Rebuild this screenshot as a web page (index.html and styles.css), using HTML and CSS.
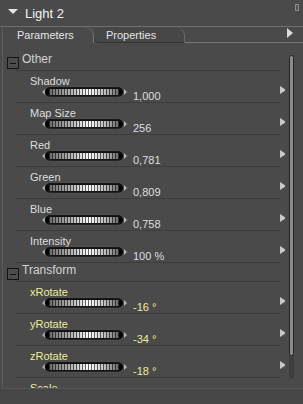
FILE: index.html
```html
<!DOCTYPE html>
<html lang="en">

<head>
    <meta charset="UTF-8">
    <title>Light 2</title>
    <link rel="stylesheet" href="styles.css">
</head>

<body>
    <div class="panel">
        <div class="title">
            <span class="fold"></span>
            <span class="name">Light 2</span>
            <span class="pin"></span>
        </div>

        <div class="tabs">
            <div class="tab active">Parameters</div>
            <div class="tab">Properties</div>
            <div class="fill"><span class="go"></span></div>
        </div>

        <div class="content">
            <div class="list">

                <div class="head"><span class="box"></span>Other</div>
                <div class="rows">
                    <div class="row">
                        <div class="ctl">
                            <div class="label">Shadow</div>
                            <div class="field"><span class="nudge l"></span><span class="knob"><span class="ridge"></span></span><span class="nudge r"></span><span class="value">1,000</span></div>
                        </div>
                        <span class="more"></span>
                    </div>
                    <div class="row">
                        <div class="ctl">
                            <div class="label">Map Size</div>
                            <div class="field"><span class="nudge l"></span><span class="knob"><span class="ridge"></span></span><span class="nudge r"></span><span class="value">256</span></div>
                        </div>
                        <span class="more"></span>
                    </div>
                    <div class="row">
                        <div class="ctl">
                            <div class="label">Red</div>
                            <div class="field"><span class="nudge l"></span><span class="knob"><span class="ridge"></span></span><span class="nudge r"></span><span class="value">0,781</span></div>
                        </div>
                        <span class="more"></span>
                    </div>
                    <div class="row">
                        <div class="ctl">
                            <div class="label">Green</div>
                            <div class="field"><span class="nudge l"></span><span class="knob"><span class="ridge"></span></span><span class="nudge r"></span><span class="value">0,809</span></div>
                        </div>
                        <span class="more"></span>
                    </div>
                    <div class="row">
                        <div class="ctl">
                            <div class="label">Blue</div>
                            <div class="field"><span class="nudge l"></span><span class="knob"><span class="ridge"></span></span><span class="nudge r"></span><span class="value">0,758</span></div>
                        </div>
                        <span class="more"></span>
                    </div>
                    <div class="row">
                        <div class="ctl">
                            <div class="label">Intensity</div>
                            <div class="field"><span class="nudge l"></span><span class="knob"><span class="ridge"></span></span><span class="nudge r"></span><span class="value">100 %</span></div>
                        </div>
                        <span class="more"></span>
                    </div>
                </div>

                <div class="head"><span class="box"></span>Transform</div>
                <div class="rows keyed">
                    <div class="row">
                        <div class="ctl">
                            <div class="label">xRotate</div>
                            <div class="field"><span class="nudge l"></span><span class="knob"><span class="ridge"></span></span><span class="nudge r"></span><span class="value">-16 °</span></div>
                        </div>
                        <span class="more"></span>
                    </div>
                    <div class="row">
                        <div class="ctl">
                            <div class="label">yRotate</div>
                            <div class="field"><span class="nudge l"></span><span class="knob"><span class="ridge"></span></span><span class="nudge r"></span><span class="value">-34 °</span></div>
                        </div>
                        <span class="more"></span>
                    </div>
                    <div class="row">
                        <div class="ctl">
                            <div class="label">zRotate</div>
                            <div class="field"><span class="nudge l"></span><span class="knob"><span class="ridge"></span></span><span class="nudge r"></span><span class="value">-18 °</span></div>
                        </div>
                        <span class="more"></span>
                    </div>
                    <div class="row">
                        <div class="ctl">
                            <div class="label">Scale</div>
                        </div>
                    </div>
                </div>

            </div>
            <div class="scroll">
                <div class="track"><div class="thumb"></div></div>
            </div>
        </div>
        <div class="foot"></div>
    </div>
</body>

</html>
```

FILE: styles.css
```css
body {
    margin: 0;
    background: #474747;
    font-family: "Liberation Sans", Arial, sans-serif;
    color: #dedede;
}

.panel {
    width: 303px;
    height: 404px;
    background: #4a4a4a;
    display: flex;
    flex-direction: column;
    overflow: hidden;
}

/* title bar */
.title {
    height: 26px;
    display: flex;
    align-items: flex-start;
    border-bottom: 1px solid #6e6e6e;
}

.fold {
    margin: 9px 0 0 8px;
    border-top: 5px solid #e6e6e6;
    border-left: 5px solid transparent;
    border-right: 5px solid transparent;
}

.name {
    margin: 5px 0 0 7px;
    font-size: 13px;
    line-height: 17px;
    color: #f2f2f2;
}

.pin {
    margin: 4px 4px 0 auto;
    width: 2px;
    height: 5px;
    border: 1px solid #8a8a8a;
    background: #555;
}

/* tabs */
.tabs {
    height: 16px;
    display: flex;
    margin-left: 2px;
    border-left: 1px solid #5c5c5c;
    font-size: 11px;
    line-height: 16px;
}

.tab {
    box-sizing: border-box;
    color: #e4e4e4;
}

.tab.active {
    width: 91px;
    padding-left: 14px;
    border-right: 1px solid #757575;
    border-top-right-radius: 9px;
}

.tab+.tab {
    width: 91px;
    padding-left: 12px;
    border-right: 1px solid #6c6c6c;
    border-bottom: 1px solid #333;
    border-top-right-radius: 9px;
    border-bottom-left-radius: 5px;
    background: #474747;
}

.fill {
    flex: 1;
    display: flex;
    border-bottom: 1px solid #767676;
}

.go {
    margin: 1px 10px 0 auto;
    border-left: 6px solid #dcdcdc;
    border-top: 5px solid transparent;
    border-bottom: 5px solid transparent;
    height: 0;
}

/* body */
.content {
    height: 345px;
    display: flex;
    margin-left: 2px;
    border-left: 1px solid #5c5c5c;
    border-bottom: 1px solid #575757;
}

.list {
    flex: 1;
    overflow: hidden;
    padding-top: 9px;
}

.head {
    height: 18px;
    display: flex;
    align-items: flex-start;
    font-size: 12px;
    line-height: 14px;
    color: #d2d2d2;
}

.box {
    box-sizing: border-box;
    width: 12px;
    height: 12px;
    margin: 5px 3px 0 4px;
    border: 1px solid #141414;
    background: #4c4c4c;
    display: flex;
    align-items: center;
    justify-content: center;
}

.box::after {
    content: "";
    width: 6px;
    height: 1px;
    background: #141414;
}

.rows {
    margin: 0 5px 0 12px;
    border-top: 1px solid #3d3d3d;
}

.row {
    box-sizing: border-box;
    height: 32px;
    display: flex;
    align-items: flex-start;
    padding-left: 15px;
    border-bottom: 1px solid #3d3d3d;
}

.ctl {
    flex: 1;
    padding-top: 4px;
}

.label {
    font-size: 11px;
    line-height: 12px;
}

.keyed .label,
.keyed .value {
    color: #ecec9e;
}

.field {
    display: flex;
    align-items: flex-start;
    margin-left: 12px;
    height: 14px;
}

.nudge {
    margin-top: 2px;
    height: 0;
    border-top: 3px solid transparent;
    border-bottom: 3px solid transparent;
}

.nudge.l {
    border-right: 3px solid #a4a4a4;
}

.nudge.r {
    border-left: 3px solid #b4b4b4;
    margin-left: 1px;
}

.knob {
    width: 78px;
    height: 10px;
    border-radius: 5px;
    background: linear-gradient(#1a1a1a, #000 40%, #000 70%, #2a2a2a);
    box-shadow: 0 0 1px #777;
    display: flex;
    align-items: center;
    justify-content: center;
}

.ridge {
    width: 70px;
    height: 6px;
    background:
        repeating-linear-gradient(90deg, rgba(0, 0, 0, 0.6) 0 1px, transparent 1px 3px),
        linear-gradient(90deg, #6a6a6a, #bdbdbd 35%, #fff 58%, #bdbdbd 80%, #6a6a6a);
}

.value {
    margin-left: 6px;
    padding-top: 3px;
    font-size: 11px;
    line-height: 12px;
}

.more {
    margin: 15px -6px 0 0;
    border-left: 6px solid #c9c9c9;
    border-top: 4px solid transparent;
    border-bottom: 4px solid transparent;
}

/* scrollbar */
.scroll {
    width: 18px;
    padding: 12px 0 0 4px;
    box-sizing: border-box;
}

.track {
    width: 5px;
    height: 324px;
    border-radius: 3px;
    background: #3f3f3f;
}

.thumb {
    box-sizing: border-box;
    height: 301px;
    border-radius: 3px;
    border: 1px solid #262626;
    background: #8c8c8c;
}

.foot {
    flex: 1;
    background: #464646;
}
```
